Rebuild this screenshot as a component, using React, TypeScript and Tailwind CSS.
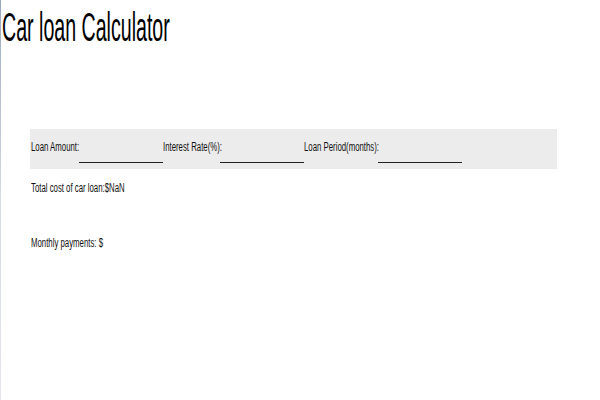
import type { ReactNode } from "react";

function Squeeze({ w, children }: { w: string; children: ReactNode }) {
  return (
    <div className={`${w} shrink-0 whitespace-nowrap`}>
      <span className="inline-block origin-left scale-x-[0.65]">{children}</span>
    </div>
  );
}

function Field({ label, w }: { label: string; w: string }) {
  return (
    <>
      <Squeeze w={w}>{label}</Squeeze>
      <input
        type="text"
        className="h-[23px] w-[84px] shrink-0 border-b border-[#222] bg-transparent outline-none"
      />
    </>
  );
}

export default function App() {
  return (
    <div
      className="flex min-h-[400px] w-full bg-white text-[#111]"
      style={{ fontFamily: '"Liberation Sans", Arial, sans-serif' }}
    >
      <div className="w-px shrink-0 bg-gradient-to-b from-[#9aa8bf] via-[#d5dbe4] to-[#e4e7ec]" />

      <div className="flex-1">
        <h1 className="pt-[4px] pl-px text-[40px] font-normal leading-[46px] text-black">
          <span className="inline-block origin-left scale-x-[0.49] whitespace-nowrap">
            Car loan Calculator
          </span>
        </h1>

        <div className="ml-[29px] mt-[79px] flex h-[40px] w-[527px] items-start bg-[#ececec] pl-px pt-[11px] text-[12px] leading-[14px]">
          <Field label="Loan Amount:" w="w-[48px]" />
          <Field label="Interest Rate(%):" w="w-[57px]" />
          <Field label="Loan Period(months):" w="w-[74px]" />
        </div>

        <div className="ml-[30px] text-[12px] leading-[14px]">
          <div className="mt-[12px]">
            <Squeeze w="w-[100px]">Total cost of car loan:$NaN</Squeeze>
          </div>
          <div className="mt-[41px]">
            <Squeeze w="w-[80px]">Monthly payments: $</Squeeze>
          </div>
        </div>
      </div>
    </div>
  );
}
